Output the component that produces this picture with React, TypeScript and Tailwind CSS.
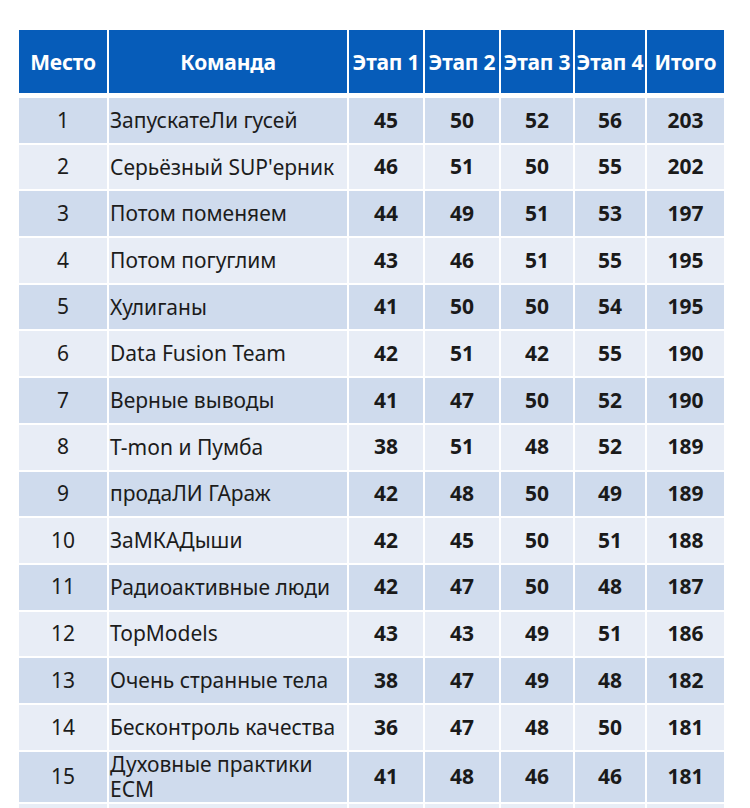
import React from "react";

type Row = {
  place: number;
  team: string;
  stages: number[];
  total: number;
};

const rows: Row[] = [
  { place: 1, team: "ЗапускатеЛи гусей", stages: [45, 50, 52, 56], total: 203 },
  { place: 2, team: "Серьёзный SUP'ерник", stages: [46, 51, 50, 55], total: 202 },
  { place: 3, team: "Потом поменяем", stages: [44, 49, 51, 53], total: 197 },
  { place: 4, team: "Потом погуглим", stages: [43, 46, 51, 55], total: 195 },
  { place: 5, team: "Хулиганы", stages: [41, 50, 50, 54], total: 195 },
  { place: 6, team: "Data Fusion Team", stages: [42, 51, 42, 55], total: 190 },
  { place: 7, team: "Верные выводы", stages: [41, 47, 50, 52], total: 190 },
  { place: 8, team: "T-mon и Пумба", stages: [38, 51, 48, 52], total: 189 },
  { place: 9, team: "продаЛИ ГАраж", stages: [42, 48, 50, 49], total: 189 },
  { place: 10, team: "ЗаМКАДыши", stages: [42, 45, 50, 51], total: 188 },
  { place: 11, team: "Радиоактивные люди", stages: [42, 47, 50, 48], total: 187 },
  { place: 12, team: "TopModels", stages: [43, 43, 49, 51], total: 186 },
  { place: 13, team: "Очень странные тела", stages: [38, 47, 49, 48], total: 182 },
  { place: 14, team: "Бесконтроль качества", stages: [36, 47, 48, 50], total: 181 },
  { place: 15, team: "Духовные практики ECM", stages: [41, 48, 46, 46], total: 181 },
  { place: 16, team: "", stages: [0, 0, 0, 0], total: 0 },
];

const headers = ["Место", "Команда", "Этап 1", "Этап 2", "Этап 3", "Этап 4", "Итого"];

const App = () => {
  return (
    <div className="min-h-[808px] w-[750px] overflow-hidden bg-white pt-[30px] pl-[19px] font-['Noto_Sans',sans-serif]">
      <div className="grid w-[705px] grid-cols-[88px_238px_74px_74px_72px_70px_77px] gap-x-[2px]">
        {headers.map((h) => (
          <div
            key={h}
            className="flex h-[63px] items-center justify-center whitespace-nowrap bg-[#065cb9] pt-[2px] text-[21px] font-bold tracking-[-0.2px] text-white"
          >
            {h}
          </div>
        ))}
      </div>
      <div className="mt-[5px] grid w-[705px] grid-cols-[88px_238px_74px_74px_72px_70px_77px] gap-x-[2px] gap-y-[2px]">
        {rows.map((r, i) => {
          const bg = i % 2 === 0 ? "bg-[#cfdbed]" : "bg-[#e8edf6]";
          const tall = r.place === 15;
          const h = tall ? "h-[50px]" : "h-[44.7px]";
          return (
            <React.Fragment key={r.place}>
              <div className={`${bg} ${h} flex items-center justify-center text-[21px] text-[#1c1c1c]`}>
                {r.team ? r.place : ""}
              </div>
              <div className={`${bg} ${h} flex items-center pl-[1px] text-[21px] leading-[25px] text-[#1c1c1c]`}>
                {r.team}
              </div>
              {r.stages.map((s, j) => (
                <div
                  key={j}
                  className={`${bg} ${h} flex items-center justify-center text-[21px] font-bold text-[#1a1a1a]`}
                >
                  {r.team ? s : ""}
                </div>
              ))}
              <div className={`${bg} ${h} flex items-center justify-center text-[21px] font-bold text-[#1a1a1a]`}>
                {r.team ? r.total : ""}
              </div>
            </React.Fragment>
          );
        })}
      </div>
    </div>
  );
};

export default App;
